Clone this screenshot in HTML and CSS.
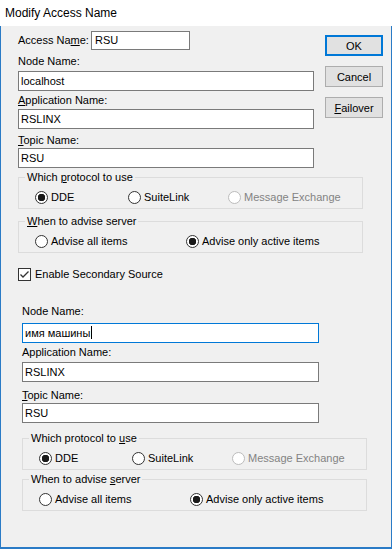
FILE: index.html
```html
<!DOCTYPE html>
<html lang="en">
<head>
    <meta charset="UTF-8">
    <title>Modify Access Name</title>
    <link rel="stylesheet" href="styles.css">
</head>
<body>
    <div class="window">
        <div class="titlebar">Modify Access Name</div>

        <div class="client">
            <!-- Primary source -->
            <div class="top">
                <div class="fields">
                    <div class="access-row">
                        <span class="label access-label">Access Na<u>m</u>e:</span>
                        <div class="edit edit-short">RSU</div>
                    </div>
                    <div class="label node-label">Node Name:</div>
                    <div class="edit node-edit">localhost</div>
                    <div class="label app-label"><u>A</u>pplication Name:</div>
                    <div class="edit app-edit">RSLINX</div>
                    <div class="label topic-label"><u>T</u>opic Name:</div>
                    <div class="edit topic-edit">RSU</div>
                </div>
                <div class="buttons">
                    <button class="btn btn-default">OK</button>
                    <button class="btn">Cancel</button>
                    <button class="btn"><u>F</u>ailover</button>
                </div>
            </div>

            <fieldset class="group group-first">
                <legend>Which <u>p</u>rotocol to use</legend>
                <div class="radios protocol">
                    <span class="radio checked">DDE</span>
                    <span class="radio">SuiteLink</span>
                    <span class="radio disabled">Message Exchange</span>
                </div>
            </fieldset>

            <fieldset class="group group-advise">
                <legend><u>W</u>hen to advise server</legend>
                <div class="radios advise">
                    <span class="radio">Advise all items</span>
                    <span class="radio checked">Advise only active items</span>
                </div>
            </fieldset>

            <div class="check-row">
                <span class="checkbox">
                    <svg width="11" height="11" viewBox="0 0 11 11"><polyline points="1.5,5.5 4,8 9.5,2.5" fill="none" stroke="#333" stroke-width="1.3"/></svg>
                </span>
                <span class="label">Enable Secondary Source</span>
            </div>

            <!-- Secondary source -->
            <div class="secondary">
                <div class="label node2-label">Node Name:</div>
                <div class="edit edit-focus node2-edit">имя машины<span class="caret"></span></div>
                <div class="label app2-label">Application Name:</div>
                <div class="edit app2-edit">RSLINX</div>
                <div class="label topic2-label"><u>T</u>opic Name:</div>
                <div class="edit topic2-edit">RSU</div>

                <fieldset class="group group-second">
                    <legend>Which protocol to <u>u</u>se</legend>
                    <div class="radios protocol">
                        <span class="radio checked">DDE</span>
                        <span class="radio">SuiteLink</span>
                        <span class="radio disabled">Message Exchange</span>
                    </div>
                </fieldset>

                <fieldset class="group group-advise2">
                    <legend>When to advise <u>s</u>erver</legend>
                    <div class="radios advise">
                        <span class="radio">Advise all items</span>
                        <span class="radio checked">Advise only active items</span>
                    </div>
                </fieldset>
            </div>
        </div>
    </div>
</body>
</html>
```

FILE: styles.css
```css
* {
    margin: 0;
    padding: 0;
    box-sizing: border-box;
}

body {
    background: #ffffff;
    font-family: "Liberation Sans", Arial, sans-serif;
    font-size: 11px;
    color: #000;
}

.window {
    width: 392px;
    height: 549px;
    background: #f0f0f0;
    border: 1px solid #2a7bc6;
    border-top: none;
    border-bottom-width: 2px;
}

.titlebar {
    height: 26px;
    margin: 0 -1px;
    padding-left: 5px;
    background: #ffffff;
    font-size: 12px;
    line-height: 26px;
}

.client {
    padding: 5px 0 0 17px;
}

.label {
    display: block;
    line-height: 13px;
    white-space: nowrap;
}

u {
    text-decoration: underline;
    text-underline-offset: 1px;
}

/* Edit boxes */
.edit {
    height: 20px;
    width: 296px;
    padding: 0 2px;
    background: #ffffff;
    border: 1px solid #7a7a7a;
    line-height: 18px;
    white-space: nowrap;
}

.edit-focus {
    border-color: #0078d7;
}

.caret {
    display: inline-block;
    width: 1px;
    height: 13px;
    margin-left: 1px;
    background: #000;
    vertical-align: -2px;
}

/* Top part: fields + buttons */
.top {
    display: flex;
}

.fields {
    width: 296px;
}

.access-row {
    display: flex;
    align-items: center;
    height: 19px;
}

.access-label {
    width: 73px;
}

.edit-short {
    width: 99px;
    height: 19px;
    padding-left: 3px;
    line-height: 17px;
}

.node-label { margin-top: 5px; }
.node-edit { margin-top: 3px; }
.app-label { margin-top: 3px; }
.app-edit { margin-top: 2px; }
.topic-label { margin-top: 5px; }
.topic-edit { margin-top: 1px; }

.buttons {
    display: flex;
    flex-direction: column;
    gap: 10px;
    margin: 4px 0 0 11px;
}

.btn {
    width: 58px;
    height: 21px;
    background: #e1e1e1;
    border: 1px solid #adadad;
    font-family: "Liberation Sans", Arial, sans-serif;
    font-size: 11px;
    color: #000;
}

.btn-default {
    border: 2px solid #0078d7;
}

/* Group boxes */
.group {
    width: 345px;
    margin: 0;
    padding: 0;
    border: 1px solid #dcdcdc;
}

.group legend {
    margin-left: 6px;
    padding: 0 2px;
    line-height: 13px;
}

.radios {
    display: grid;
    padding: 6px 0 4px 16px;
    height: 14px;
    box-sizing: content-box;
}

.protocol {
    grid-template-columns: 93px 100px auto;
}

.advise {
    grid-template-columns: 151px auto;
}

.radio {
    display: flex;
    align-items: center;
    gap: 3px;
    height: 14px;
    white-space: nowrap;
}

.radio::before {
    content: "";
    width: 13px;
    height: 13px;
    flex: none;
    border: 1px solid #333;
    border-radius: 50%;
    background: #fff;
    box-sizing: border-box;
}

.radio.checked::before {
    background: radial-gradient(circle, #1a1a1a 0 3.5px, #fff 4px);
}

.radio.disabled {
    color: #838383;
}

.radio.disabled::before {
    border-color: #bcbcbc;
}

.group-first { margin-top: 3px; }
.group-advise { margin-top: 6px; }

/* Checkbox */
.check-row {
    display: flex;
    align-items: center;
    gap: 4px;
    height: 13px;
    margin-top: 15px;
}

.checkbox {
    width: 13px;
    height: 13px;
    border: 1px solid #333;
    background: #fff;
    display: flex;
    align-items: center;
    justify-content: center;
}

/* Secondary source */
.secondary {
    padding-left: 4px;
}

.secondary .edit {
    width: 297px;
}

.node2-label { margin-top: 24px; }
.node2-edit { margin-top: 5px; }
.app2-label { margin-top: 3px; }
.app2-edit { margin-top: 3px; }
.topic2-label { margin-top: 7px; }
.topic2-edit { margin-top: 1px; }

.group-second { margin-top: 9px; }
.group-advise2 { margin-top: 3px; }
```
